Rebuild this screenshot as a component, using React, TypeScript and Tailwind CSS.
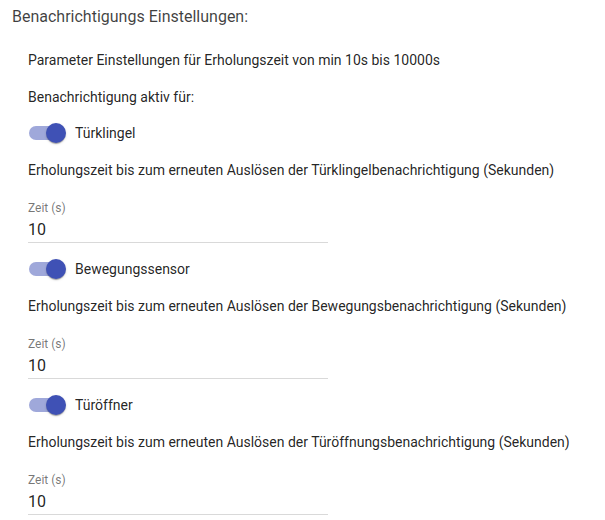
import { useState } from 'react';

const font = { fontFamily: 'Roboto, "Liberation Sans", sans-serif' };

function Toggle({ label, checked, onChange }: { label: string; checked: boolean; onChange: (v: boolean) => void }) {
  return (
    <label className="-ml-[11px] flex h-[38px] cursor-pointer items-center">
      <span className="relative block h-[38px] w-[58px]">
        <span
          className={`absolute left-[12px] top-[12px] h-[14px] w-[34px] rounded-full ${checked ? 'bg-[#3f51b5]/50' : 'bg-black/40'}`}
        />
        <span
          className={`absolute top-[9px] h-[20px] w-[20px] rounded-full shadow-[0_2px_1px_-1px_rgba(0,0,0,0.2),0_1px_1px_0_rgba(0,0,0,0.14),0_1px_3px_0_rgba(0,0,0,0.12)] ${checked ? 'left-[29px] bg-[#3f51b5]' : 'left-[9px] bg-[#fafafa]'}`}
        />
        <input type="checkbox" className="absolute inset-0 opacity-0" checked={checked} onChange={(e) => onChange(e.target.checked)} />
      </span>
      <span className="text-[14px] leading-5 text-black/[0.87]">{label}</span>
    </label>
  );
}

function Section({ label, text }: { label: string; text: string }) {
  const [on, setOn] = useState(true);
  const [value, setValue] = useState('10');
  return (
    <div>
      <div className="mt-[7px]">
        <Toggle label={label} checked={on} onChange={setOn} />
      </div>
      <p className="mt-[8px] text-[14px] leading-5 text-black/[0.87]">{text}</p>
      <div className="mt-[20px] w-[300px]">
        <span className="block text-[12px] leading-4 text-black/[0.54]">Zeit (s)</span>
        <input
          className="mt-[3px] block h-[24px] w-full border-b border-[#d9d9d9] pb-[3px] text-[16px] leading-5 text-black/[0.87] outline-none"
          value={value}
          onChange={(e) => setValue(e.target.value)}
        />
      </div>
    </div>
  );
}

export default function App() {
  return (
    <div className="min-h-[520px] w-[605px] bg-white" style={font}>
      <h2 className="ml-3 pt-[5px] text-[16px] leading-6 text-black/[0.75]">Benachrichtigungs Einstellungen:</h2>
      <div className="pl-7">
        <p className="mt-[21px] text-[14px] leading-5 text-black/[0.87]">
          Parameter Einstellungen für Erholungszeit von min 10s bis 10000s
        </p>
        <p className="mt-[17px] text-[14px] leading-5 text-black/[0.87]">Benachrichtigung aktiv für:</p>
        <Section label="Türklingel" text="Erholungszeit bis zum erneuten Auslösen der Türklingelbenachrichtigung (Sekunden)" />
        <Section label="Bewegungssensor" text="Erholungszeit bis zum erneuten Auslösen der Bewegungsbenachrichtigung (Sekunden)" />
        <Section label="Türöffner" text="Erholungszeit bis zum erneuten Auslösen der Türöffnungsbenachrichtigung (Sekunden)" />
      </div>
    </div>
  );
}
